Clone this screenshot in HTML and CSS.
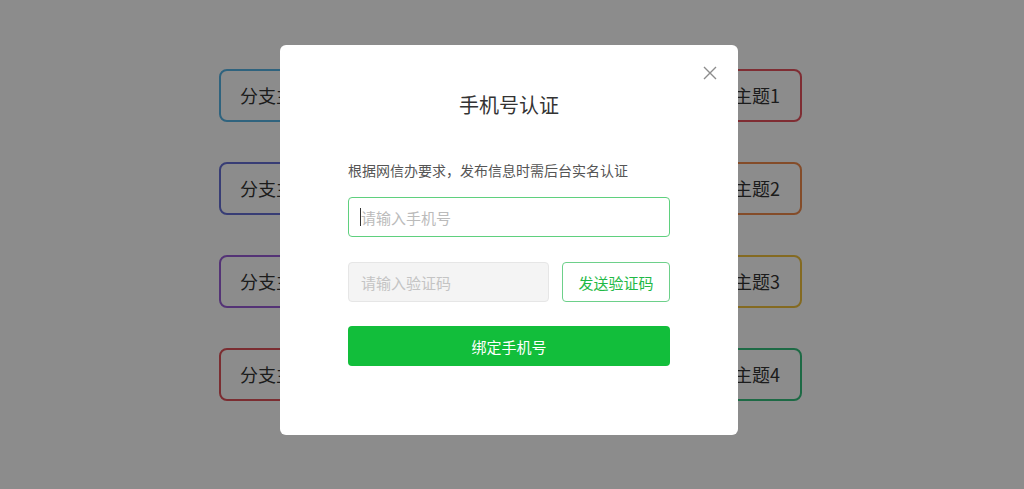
FILE: index.html
```html
<!DOCTYPE html>
<html lang="zh-CN">
<head>
  <meta charset="UTF-8">
  <meta name="viewport" content="width=device-width, initial-scale=1.0">
  <title>手机号认证</title>
  <link rel="stylesheet" href="styles.css">
</head>
<body>
  <!-- 背景：分支主题 -->
  <div class="board">
    <div class="branch-col">
      <div class="branch c-blue">分支主题1</div>
      <div class="branch c-indigo">分支主题2</div>
      <div class="branch c-purple">分支主题3</div>
      <div class="branch c-red">分支主题4</div>
    </div>
    <div class="branch-col">
      <div class="branch c-rose">分支主题1</div>
      <div class="branch c-orange">分支主题2</div>
      <div class="branch c-yellow">分支主题3</div>
      <div class="branch c-green">分支主题4</div>
    </div>
  </div>

  <!-- 弹窗 -->
  <div class="mask">
    <div class="modal">
      <button class="modal-close" type="button" aria-label="关闭">
        <svg width="14" height="14" viewBox="0 0 14 14">
          <path d="M1 1L13 13M13 1L1 13" stroke="#8c8c8c" stroke-width="1.4" fill="none"/>
        </svg>
      </button>
      <h2 class="modal-title">手机号认证</h2>
      <p class="modal-tip">根据网信办要求，发布信息时需后台实名认证</p>
      <div class="field">
        <span class="caret"></span>
        <input class="input input-focus" type="text" placeholder="请输入手机号">
      </div>
      <div class="code-row">
        <input class="input input-disabled" type="text" placeholder="请输入验证码" disabled>
        <button class="btn-send" type="button">发送验证码</button>
      </div>
      <button class="btn-bind" type="button">绑定手机号</button>
    </div>
  </div>
</body>
</html>
```

FILE: styles.css
```css
* {
  margin: 0;
  padding: 0;
  box-sizing: border-box;
}
body {
  font-family: "Noto Sans CJK SC", "Noto Sans", sans-serif;
  background-color: #fff;
  color: #333;
  height: 489px;
  overflow: hidden;
}

/* 背景 */
.board {
  display: flex;
  justify-content: space-between;
  width: 583px;
  margin-left: 219px;
  padding-top: 69px;
}
.branch-col {
  display: flex;
  flex-direction: column;
  gap: 40px;
}
.branch-col:last-child {
  align-items: flex-end;
}
.branch {
  height: 53px;
  padding: 0 20px 0 19px;
  border: 2px solid #999;
  border-radius: 8px;
  font-size: 18px;
  line-height: 49px;
  color: #333;
  white-space: nowrap;
}
.c-blue { border-color: #56b4e6; }
.c-indigo { border-color: #6670d6; }
.c-purple { border-color: #9a5ed8; }
.c-red { border-color: #e0525a; }
.c-rose { border-color: #e8525e; }
.c-orange { border-color: #f08a4c; }
.c-yellow { border-color: #f0c23c; }
.c-green { border-color: #36c27e; }

/* 遮罩 */
.mask {
  position: fixed;
  top: 0;
  left: 0;
  width: 100%;
  height: 100%;
  background-color: rgba(0, 0, 0, 0.45);
  display: flex;
  align-items: flex-start;
  padding: 45px 0 0 280px;
}
.modal {
  position: relative;
  width: 458px;
  height: 390px;
  background-color: #fff;
  border-radius: 6px;
  padding: 44px 68px 0;
}
.modal-close {
  position: absolute;
  top: 20px;
  right: 20px;
  width: 16px;
  height: 16px;
  border: none;
  background: none;
  display: flex;
  align-items: center;
  justify-content: center;
  cursor: pointer;
}
.modal-title {
  font-size: 20px;
  font-weight: normal;
  color: #333;
  text-align: center;
  line-height: 32px;
}
.modal-tip {
  margin-top: 38px;
  font-size: 14px;
  line-height: 22px;
  color: #555;
}

.field {
  position: relative;
  margin-top: 16px;
}
.caret {
  position: absolute;
  top: 11px;
  left: 12px;
  width: 1px;
  height: 18px;
  background-color: #333;
}
.input {
  display: block;
  width: 100%;
  height: 40px;
  padding: 0 12px;
  border: 1px solid #dcdcdc;
  border-radius: 4px;
  font-family: inherit;
  font-size: 15px;
  color: #333;
  outline: none;
  background-color: #fff;
}
.input::placeholder {
  color: #bbb;
}
.input-focus {
  border-color: #5fd07e;
}
.input-disabled {
  width: 201px;
  background-color: #f4f4f4;
  border-color: #e6e6e6;
}
.input-disabled::placeholder {
  color: #c4c4c4;
}

.code-row {
  display: flex;
  justify-content: space-between;
  margin-top: 25px;
}
.btn-send {
  width: 108px;
  height: 40px;
  border: 1px solid #6dd08a;
  border-radius: 4px;
  background-color: #fff;
  color: #1fb946;
  font-family: inherit;
  font-size: 15px;
  cursor: pointer;
}
.btn-bind {
  display: block;
  width: 100%;
  height: 40px;
  margin-top: 24px;
  border: none;
  border-radius: 4px;
  background-color: #12be3b;
  color: #fff;
  font-family: inherit;
  font-size: 15px;
  cursor: pointer;
}
```
